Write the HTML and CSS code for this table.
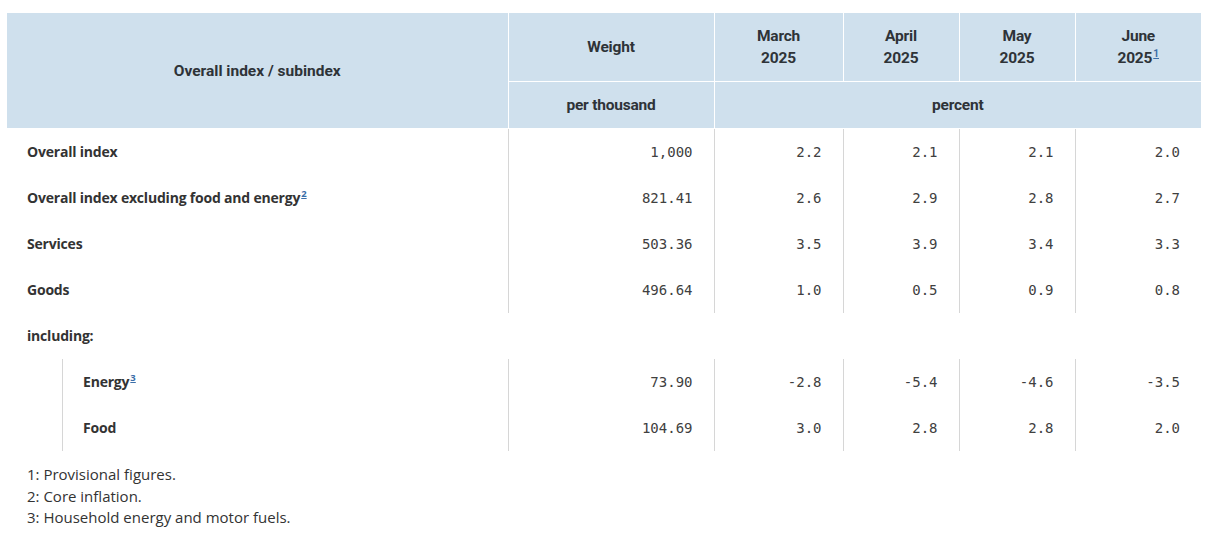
FILE: index.html
```html
<!DOCTYPE html>
<html lang="en">
<head>
<meta charset="utf-8">
<title>Inflation table</title>
<link rel="stylesheet" href="styles.css">
</head>
<body>
<div class="wrap">
<table class="tbl">
  <colgroup>
    <col class="c-label">
    <col class="c-weight">
    <col class="c-m1">
    <col class="c-m2">
    <col class="c-m3">
    <col class="c-m4">
  </colgroup>
  <thead>
    <tr>
      <th rowspan="2" class="h-label">Overall index / subindex</th>
      <th>Weight</th>
      <th>March<br>2025</th>
      <th>April<br>2025</th>
      <th>May<br>2025</th>
      <th class="h-last">June<br>2025<a class="fn" href="#f1">1</a></th>
    </tr>
    <tr>
      <th>per thousand</th>
      <th colspan="4" class="h-last">percent</th>
    </tr>
  </thead>
  <tbody>
    <tr>
      <td class="lbl">Overall index</td>
      <td class="num">1,000</td><td class="num">2.2</td><td class="num">2.1</td><td class="num">2.1</td><td class="num">2.0</td>
    </tr>
    <tr>
      <td class="lbl">Overall index excluding food and energy<a class="fn" href="#f2">2</a></td>
      <td class="num">821.41</td><td class="num">2.6</td><td class="num">2.9</td><td class="num">2.8</td><td class="num">2.7</td>
    </tr>
    <tr>
      <td class="lbl">Services</td>
      <td class="num">503.36</td><td class="num">3.5</td><td class="num">3.9</td><td class="num">3.4</td><td class="num">3.3</td>
    </tr>
    <tr>
      <td class="lbl">Goods</td>
      <td class="num">496.64</td><td class="num">1.0</td><td class="num">0.5</td><td class="num">0.9</td><td class="num">0.8</td>
    </tr>
    <tr>
      <td class="lbl group" colspan="6">including:</td>
    </tr>
    <tr>
      <td class="sub"><div class="sub-in">Energy<a class="fn" href="#f3">3</a></div></td>
      <td class="num">73.90</td><td class="num">-2.8</td><td class="num">-5.4</td><td class="num">-4.6</td><td class="num">-3.5</td>
    </tr>
    <tr>
      <td class="sub"><div class="sub-in">Food</div></td>
      <td class="num">104.69</td><td class="num">3.0</td><td class="num">2.8</td><td class="num">2.8</td><td class="num">2.0</td>
    </tr>
  </tbody>
</table>
<div class="notes">
  <p id="f1">1: Provisional figures.</p>
  <p id="f2">2: Core inflation.</p>
  <p id="f3">3: Household energy and motor fuels.</p>
</div>
</div>
</body>
</html>
```
FILE: styles.css
```css
html, body {
  margin: 0;
  padding: 0;
  background: #ffffff;
}
body {
  font-family: "Open Sans", "Liberation Sans", sans-serif;
  color: #333333;
}
.wrap {
  padding: 13px 10px 0 7px;
}
.tbl {
  width: 1194px;
  border-collapse: collapse;
  table-layout: fixed;
}
.c-label { width: 501px; }
.c-weight { width: 206px; }
.c-m1 { width: 129px; }
.c-m2 { width: 116px; }
.c-m3 { width: 116px; }
.c-m4 { width: 126px; }

.tbl th {
  background: #cfe0ed;
  font-family: Roboto, "Liberation Sans", sans-serif;
  font-weight: 700;
  font-size: 15.5px;
  line-height: 22px;
  color: #2e3338;
  padding: 12px 8px;
  text-align: center;
  vertical-align: middle;
  border: 1px solid #ffffff;
  border-top: 0;
  letter-spacing: -0.2px;
}
.tbl th.h-label { border-left: 0; letter-spacing: 0; }
.tbl th.h-last { border-right: 0; }
.tbl th .fn { font-size: 10px; }

.tbl td {
  font-size: 14px;
  line-height: 22px;
  padding: 12px 20px;
  height: 22px;
  border-left: 1px solid #d6d6d6;
  color: #333333;
}
.tbl td:first-child { border-left: 0; }
.tbl td.lbl {
  font-family: "Open Sans", "Liberation Sans", sans-serif;
  font-weight: 700;
  font-size: 14px;
  letter-spacing: -0.2px;
}
.tbl td.num {
  text-align: right;
  font-family: "DejaVu Sans Mono", "Liberation Mono", monospace;
  font-size: 14px;
  color: #404040;
  padding-right: 21px;
}
.tbl td.sub {
  padding: 0;
}
.sub-in {
  margin-left: 55px;
  border-left: 1px solid #d6d6d6;
  padding: 12px 20px;
  font-weight: 700;
  font-size: 14px;
  letter-spacing: -0.2px;
  line-height: 22px;
}
.fn {
  color: #3b6ea8;
  font-size: 9.5px;
  vertical-align: super;
  line-height: 0;
  text-decoration: underline;
  margin-left: 1px;
  letter-spacing: 0;
}
.notes {
  padding: 13px 20px 0 20px;
}
.notes p {
  margin: 0;
  font-family: "Open Sans", "Liberation Sans", sans-serif;
  font-size: 15px;
  line-height: 21.5px;
  color: #333333;
}
```
